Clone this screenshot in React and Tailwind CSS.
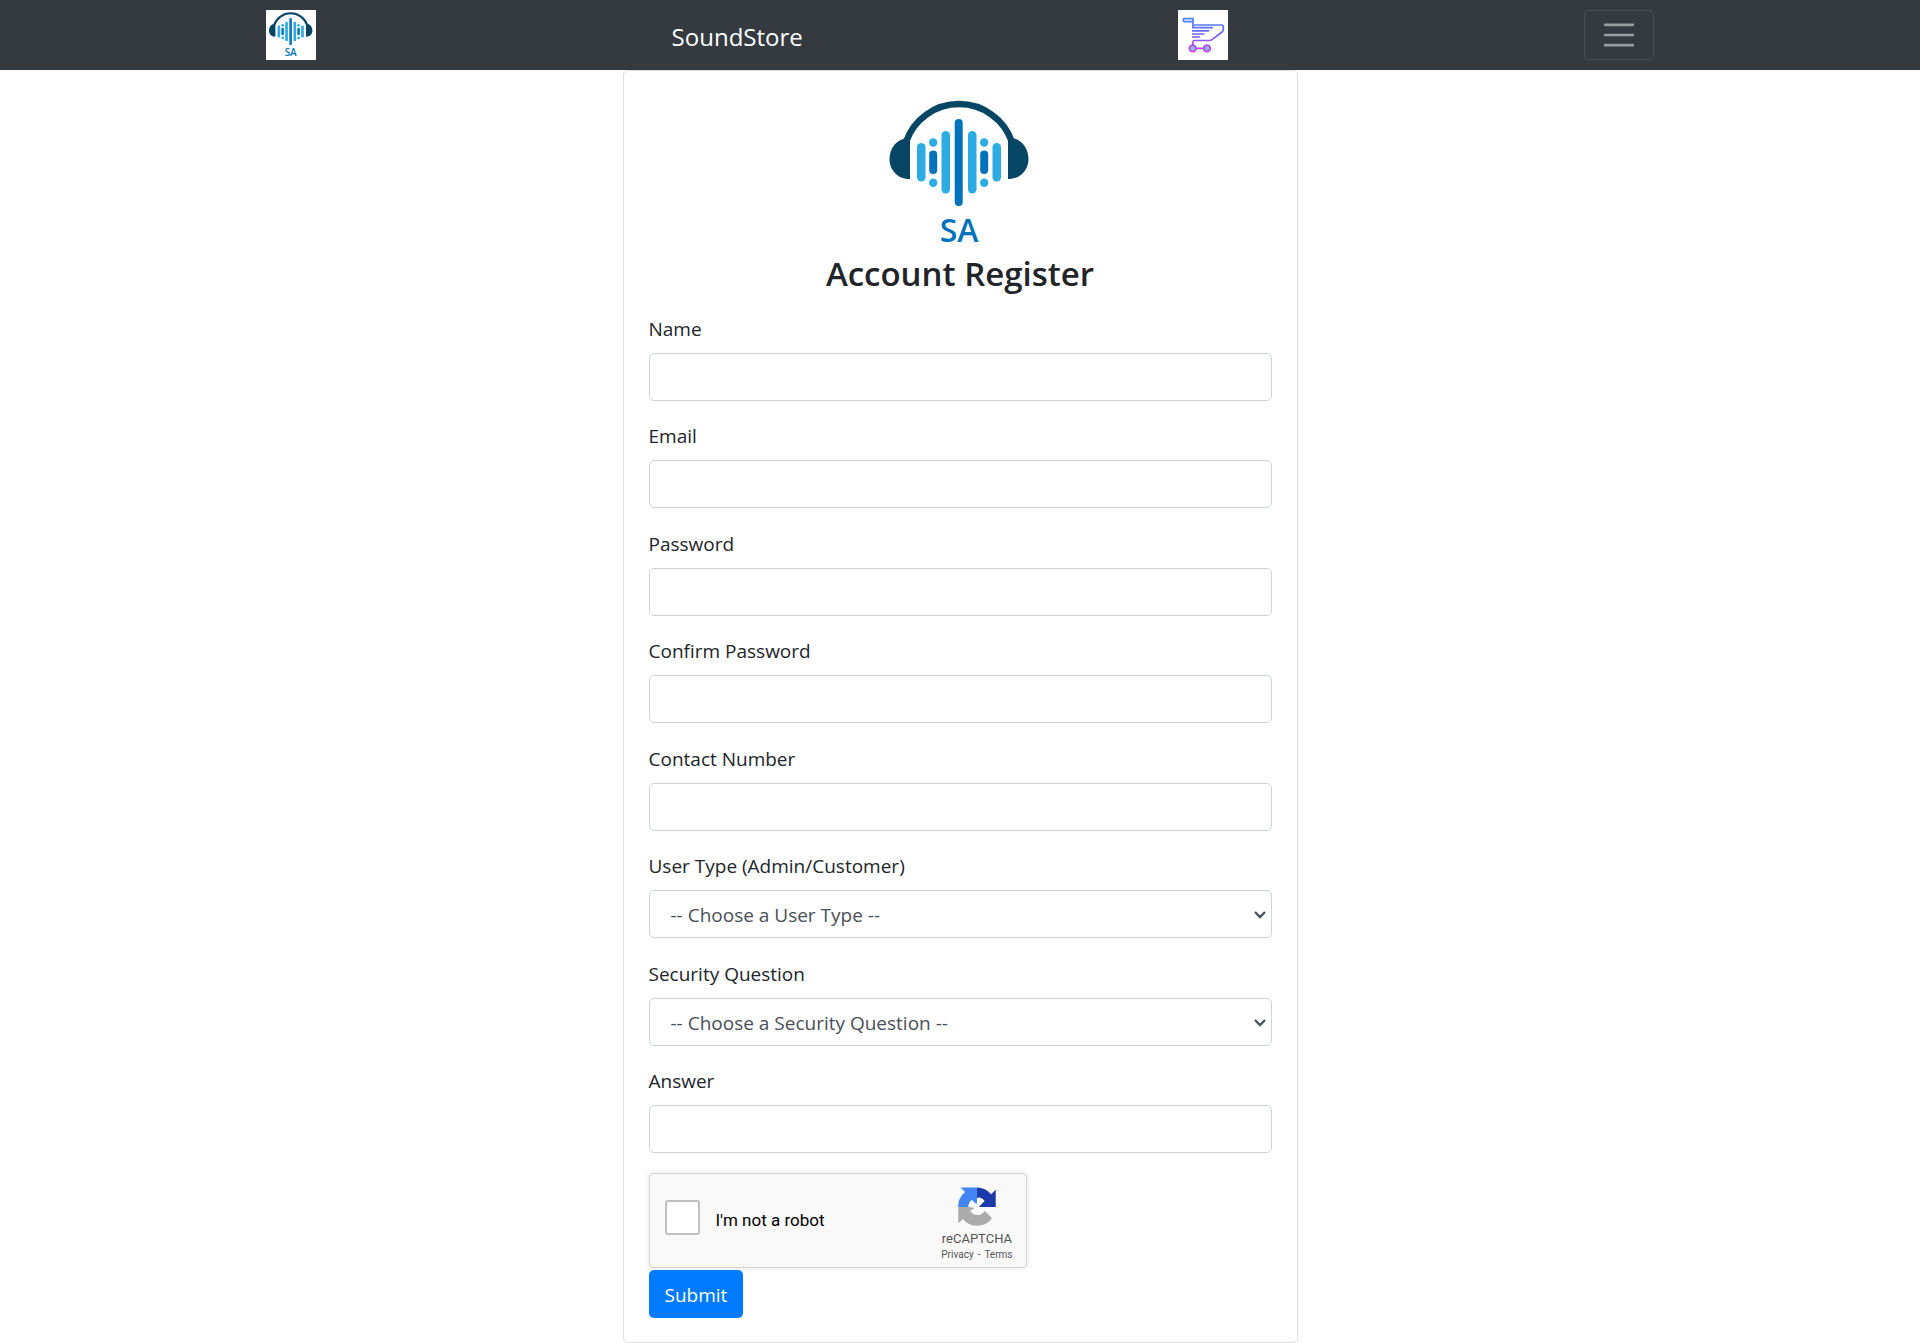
import React from "react";

function SoundLogo({ className }) {
  return (
    <svg viewBox="0 0 160 153" className={className} role="img" aria-label="SA">
      <rect width="160" height="153" fill="#fff" />
      <path d="M26 45 A56 56 0 0 1 132 45" fill="none" stroke="#064564" strokeWidth="6.500" />
      <path d="M30 40 V82 C18 82.500 9.500 73 9.500 62 C9.500 52 16 43 25 41.500 Z" fill="#064564" />
      <path d="M128 40 V82 C140 82.500 148.500 73 148.500 62 C148.500 52 142 43 134 41.500 Z" fill="#064564" />
      <g fill="#2cace3">
        <rect x="37" y="46" width="8.500" height="38.500" rx="4.200" />
        <rect x="61.500" y="34" width="8.500" height="62.500" rx="4.200" />
        <rect x="88" y="34" width="8.500" height="62.500" rx="4.200" />
        <rect x="112.500" y="46" width="8.500" height="38.500" rx="4.200" />
        <circle cx="53.200" cy="45.500" r="4.200" />
        <circle cx="53.200" cy="85.800" r="4.200" />
        <circle cx="104.200" cy="45.500" r="4.200" />
        <circle cx="104.200" cy="85.800" r="4.200" />
      </g>
      <g fill="#0072bc">
        <rect x="49.200" y="53.500" width="8" height="23.500" rx="4" />
        <rect x="100.200" y="53.500" width="8" height="23.500" rx="4" />
        <rect x="74.700" y="22" width="8" height="87" rx="4" />
      </g>
      <text
        x="79"
        y="145"
        textAnchor="middle"
        fontFamily="'Open Sans', sans-serif"
        fontWeight="600"
        fontSize="32"
        fill="#0072bc"
      >
        SA
      </text>
    </svg>
  );
}

function CartIcon() {
  return (
    <svg viewBox="0 0 50 50" className="size-[50px] bg-white" fill="none" aria-hidden="true">
      <defs>
        <linearGradient id="cart" gradientUnits="userSpaceOnUse" x1="0" y1="8" x2="0" y2="42">
          <stop offset="0" stopColor="#4285ff" />
          <stop offset="0.45" stopColor="#6f66fa" />
          <stop offset="1" stopColor="#cb3df2" />
        </linearGradient>
      </defs>
      <g stroke="url(#cart)" strokeWidth="1.700" strokeLinejoin="round">
        <path d="M15 18 V8.700 H6.500 Q5.300 8.700 5.300 10.200 Q5.300 11.700 6.500 11.700 H15" />
        <path d="M15 15 H43.500 Q45.300 15 45.300 17 V19.500 Q45.300 21 44 22 L34 29.700 Q33 30.500 31.500 30.500 H16.500 Q15 30.500 15 32 V35" />
        <path d="M14 17.700 H35 M14 20.900 H31 M14 24 H26.500 M14 27 H22" />
        <path d="M18 38.400 H26 L26 38.500" />
        <circle cx="14.700" cy="38.400" r="3.300" fill="#93b4e8" />
        <circle cx="29" cy="38.400" r="3.300" fill="#93b4e8" />
      </g>
    </svg>
  );
}

function RecaptchaLogo() {
  return (
    <svg viewBox="0 0 64 64" className="size-[40px]" aria-hidden="true">
      <path fill="#1c3aa9" d="M62 31.950a28 28 0 0 0-.04-1.270V4.320l-7.290 7.290A29.900 29.900 0 0 0 31.600.700v16.700a15.300 15.300 0 0 1 4.500-.500 14 14 0 0 1 7.900 5.400l-9.500 9.640H62z" />
      <path fill="#4285f4" d="M31.900.700H5.600l7.290 7.290A29.900 29.900 0 0 0 2 32h16.500a15.300 15.300 0 0 1 .400-4.800 14 14 0 0 1 4.600-6.600l8.400 9.400z" />
      <path fill="#ababab" d="M2 32v26.300l7.290-7.290A29.900 29.900 0 0 0 32 62a30 30 0 0 0 24-12L44.200 38a14.500 14.500 0 0 1-4.400 4.900 10.400 10.400 0 0 1-6.700 1.900 15 15 0 0 1-12-6.400l8.600-6.400z" />
      <path fill="#f9f9f9" d="M23.500 20.600 L31 27 L36 17 L44 21 L35 31.900 L44.200 38 L39 43 L29.500 33.500 L18.700 32 L18.900 27 L26 28 Z" />
    </svg>
  );
}

const fields = [
  { id: "name", label: "Name", type: "text" },
  { id: "email", label: "Email", type: "email" },
  { id: "password", label: "Password", type: "password" },
  { id: "confirm", label: "Confirm Password", type: "password" },
  { id: "contact", label: "Contact Number", type: "tel" },
  { id: "userType", label: "User Type (Admin/Customer)", choice: "-- Choose a User Type --" },
  { id: "question", label: "Security Question", choice: "-- Choose a Security Question --" },
  { id: "answer", label: "Answer", type: "text" },
];

function Field({ id, label, type, choice }) {
  return (
    <div className="odd:mb-[19px] even:mb-5">
      <label htmlFor={id} className="mb-2 block w-fit leading-8">
        {label}
      </label>
      {choice ? (
        <div className="relative">
          <select
            id={id}
            className="block h-12 w-full appearance-none rounded-[5px] border border-[#ced4da] bg-white pt-[3px] pr-10 pl-[21px] text-[#495057]"
          >
            <option>{choice}</option>
          </select>
          <svg
            viewBox="0 0 14 9"
            className="pointer-events-none absolute top-5 right-[5px] h-[9px] w-[14px]"
            fill="none"
            stroke="#495057"
            strokeWidth="2.300"
            aria-hidden="true"
          >
            <path d="M2 2 L7 7 L12 2" />
          </svg>
        </div>
      ) : (
        <input
          id={id}
          type={type}
          className="block h-12 w-full rounded-[5px] border border-[#ced4da] bg-white px-[15px] text-[#495057]"
        />
      )}
    </div>
  );
}

function Recaptcha() {
  return (
    <div className="flex h-[95px] w-full max-w-[378px] items-center rounded-[4px] border border-[#d3d3d3] bg-[#f9f9f9] pr-[13px] pl-[15px] font-['Roboto',sans-serif] shadow-[0_0_5px_1px_rgba(0,0,0,0.08)]">
      <input
        id="robot"
        type="checkbox"
        className="mr-4 mb-[6px] size-[35px] shrink-0 appearance-none rounded-[3px] border-2 border-[#c1c1c1] bg-white"
      />
      <label htmlFor="robot" className="flex-1 text-[17px] text-black">
        I'm not a robot
      </label>
      <div className="flex flex-col items-center pt-[9px] text-[#555]">
        <RecaptchaLogo />
        <span className="mt-1 text-[13px] leading-4">reCAPTCHA</span>
        <span className="flex gap-1 text-[10px] leading-4">
          <a href="#privacy">Privacy</a>
          <span>-</span>
          <a href="#terms">Terms</a>
        </span>
      </div>
    </div>
  );
}

export default function App() {
  return (
    <div className="bg-white font-['Open_Sans','Noto_Sans',sans-serif] text-[19px] text-[#212529]">
      <nav className="bg-[#343a40] py-[10px]">
        <div className="mx-auto flex w-full max-w-[1388px] items-center justify-between">
          <a href="#home">
            <SoundLogo className="size-[50px] bg-white" />
          </a>
          <a href="#store" className="mr-5 pt-1 text-[24px] leading-[38px] text-white">
            SoundStore
          </a>
          <a href="#cart" aria-label="Cart">
            <CartIcon />
          </a>
          <button
            type="button"
            aria-label="Toggle navigation"
            className="flex h-[50px] w-[70px] items-center justify-center rounded-[5px] border border-white/10"
          >
            <svg viewBox="0 0 30 30" className="size-[38px]" stroke="rgba(255,255,255,0.5)" strokeWidth="2" strokeLinecap="round" aria-hidden="true">
              <path d="M4 7h22M4 15h22M4 23h22" />
            </svg>
          </button>
        </div>
      </nav>

      <main className="mx-auto w-full max-w-[675px] rounded-[5px] border border-black/[0.125] px-[25px] pt-[26px] pb-6">
        <header className="flex flex-col items-center">
          <SoundLogo className="h-[153px] w-[160px]" />
          <h2 className="mt-[3px] mb-[18px] text-[33px] leading-[42px] font-semibold">Account Register</h2>
        </header>
        <form>
          {fields.map((f) => (
            <Field key={f.id} {...f} />
          ))}
          <Recaptcha />
          <button type="submit" className="mt-[2px] block h-12 rounded-[5px] bg-[#007bff] px-4 pt-[2px] text-white">
            Submit
          </button>
        </form>
      </main>
    </div>
  );
}
